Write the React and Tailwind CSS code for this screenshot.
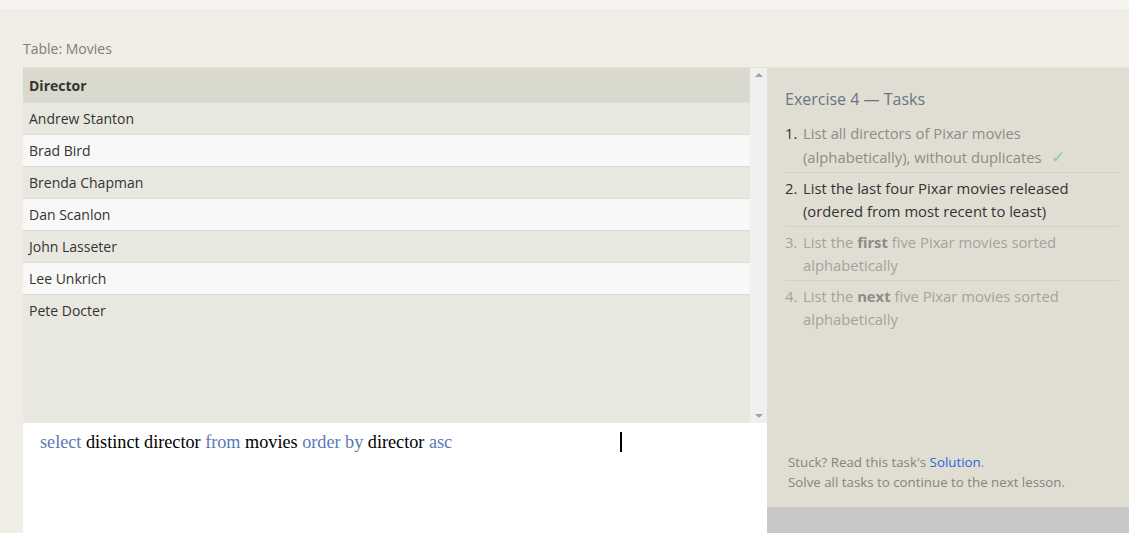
const directors = [
  "Andrew Stanton",
  "Brad Bird",
  "Brenda Chapman",
  "Dan Scanlon",
  "John Lasseter",
  "Lee Unkrich",
  "Pete Docter",
];

function Kw({ children }) {
  return <span className="text-[#5b78b5]">{children}</span>;
}

export default function App() {
  return (
    <div className="h-[533px] w-[1129px] overflow-hidden bg-[#efede5] font-['Open_Sans',sans-serif]">
      <div className="h-[9px] bg-[#f5f4f0]" />
      <div className="flex pl-[23px]">
        {/* left: table + editor */}
        <div className="w-[744px]">
          <div className="pt-[30px] pb-[9px] text-[14px] leading-[19px] text-[#7d7d7a]">Table: Movies</div>
          <div className="flex h-[356px] border-t border-[#e2e1da] bg-[#e9e8e0]">
            <div className="flex-1">
              <div className="flex h-[34px] items-center bg-[#dad9cd] px-[6px] text-[14px] font-bold text-[#333]">
                Director
              </div>
              {directors.map((d, i) => (
                <div
                  key={d}
                  className={
                    "flex h-[32px] items-center border-t border-[#dcdcd8] px-[6px] text-[14px] text-[#333] " +
                    (i % 2 === 1 ? "bg-[#f8f8f7]" : "bg-[#e9e8e0]")
                  }
                >
                  {d}
                </div>
              ))}
            </div>
            <div className="flex w-[17px] flex-col items-center justify-between bg-[#f0f0f0] py-[5px]">
              <div className="h-0 w-0 border-x-[4px] border-b-[4px] border-x-transparent border-b-[#a3a3a3]" />
              <div className="h-0 w-0 border-x-[4px] border-t-[4px] border-x-transparent border-t-[#a3a3a3]" />
            </div>
          </div>
          <div className="relative h-[110px] bg-white pl-[17px] pt-[8px] font-['Liberation_Serif',serif] text-[18.2px] leading-[22px] text-black">
            <Kw>select</Kw> distinct director <Kw>from</Kw> movies <Kw>order</Kw> <Kw>by</Kw> director <Kw>asc</Kw>
            <div className="absolute left-[597px] top-[9px] h-[20px] w-[2px] bg-black" />
          </div>
        </div>

        {/* right: tasks */}
        <div className="mt-[58px] flex-1">
          <div className="flex h-[440px] flex-col border-t border-[#e8e7df] bg-[#e0ded3] pl-[18px] pr-[10px]">
            <div className="pt-[20px] text-[16px] leading-[22px] text-[#6b7486]">Exercise 4 — Tasks</div>
            <ol className="mt-[12px] text-[14.8px] leading-[23px]">
              <li className="flex border-b border-[#d2d0c5] pb-[3px] text-[#8d8c86]">
                <span className="w-[18px] text-[#333]">1.</span>
                <span>
                  List all directors of Pixar movies
                  <br />
                  (alphabetically), without duplicates{" "}
                  <span className="ml-[6px] text-[17px] text-[#8fcf8f]">✓</span>
                </span>
              </li>
              <li className="flex border-b border-[#d2d0c5] pb-[3px] pt-[4px] text-[#333]">
                <span className="w-[18px]">2.</span>
                <span>
                  List the last four Pixar movies released
                  <br />
                  (ordered from most recent to least)
                </span>
              </li>
              <li className="flex border-b border-[#d2d0c5] pb-[3px] pt-[4px] text-[#a4a39c]">
                <span className="w-[18px]">3.</span>
                <span>
                  List the <b className="text-[#8d8c86]">first</b> five Pixar movies sorted
                  <br />
                  alphabetically
                </span>
              </li>
              <li className="flex pt-[4px] text-[#a4a39c]">
                <span className="w-[18px]">4.</span>
                <span>
                  List the <b className="text-[#8d8c86]">next</b> five Pixar movies sorted
                  <br />
                  alphabetically
                </span>
              </li>
            </ol>
            <div className="mt-auto pb-[15px] pl-[3px] text-[13.3px] leading-[20px] text-[#85847f]">
              <div>
                Stuck? Read this task's <span className="text-[#2a66d8]">Solution</span>.
              </div>
              <div>Solve all tasks to continue to the next lesson.</div>
            </div>
          </div>
          <div className="h-[40px] bg-[#c8c8c8]" />
        </div>
      </div>
    </div>
  );
}
